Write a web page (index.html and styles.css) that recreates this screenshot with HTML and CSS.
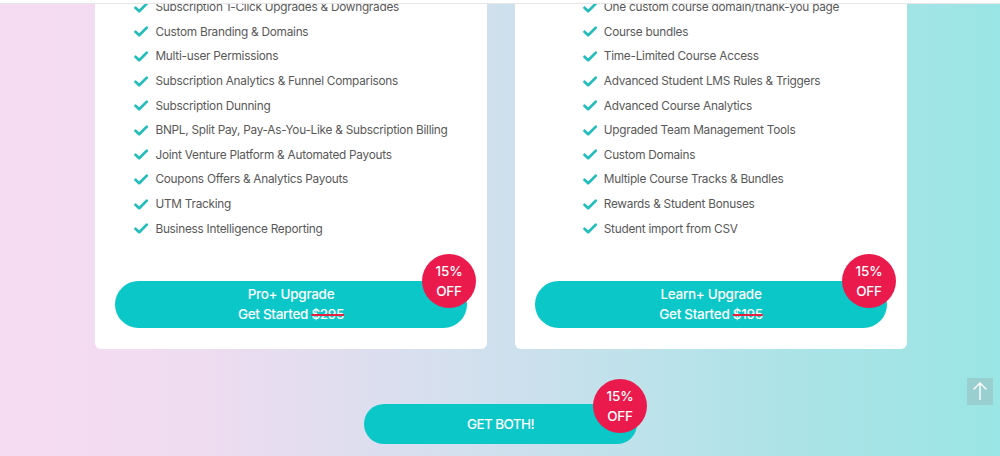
FILE: index.html
```html
<!DOCTYPE html>
<html lang="en">
<head>
<meta charset="utf-8">
<title>Upgrades</title>
<link rel="stylesheet" href="styles.css">
</head>
<body>
<div class="topbar"></div>
<main class="page">
  <section class="cards">
    <div class="card">
      <ul class="features">
        <li><svg class="check" viewBox="0 0 14 11"><path d="M1.5 5.8 L5.2 9.2 L12.8 1.6" /></svg>Subscription 1-Click Upgrades &amp; Downgrades</li>
        <li><svg class="check" viewBox="0 0 14 11"><path d="M1.5 5.8 L5.2 9.2 L12.8 1.6" /></svg>Custom Branding &amp; Domains</li>
        <li><svg class="check" viewBox="0 0 14 11"><path d="M1.5 5.8 L5.2 9.2 L12.8 1.6" /></svg>Multi-user Permissions</li>
        <li><svg class="check" viewBox="0 0 14 11"><path d="M1.5 5.8 L5.2 9.2 L12.8 1.6" /></svg>Subscription Analytics &amp; Funnel Comparisons</li>
        <li><svg class="check" viewBox="0 0 14 11"><path d="M1.5 5.8 L5.2 9.2 L12.8 1.6" /></svg>Subscription Dunning</li>
        <li><svg class="check" viewBox="0 0 14 11"><path d="M1.5 5.8 L5.2 9.2 L12.8 1.6" /></svg>BNPL, Split Pay, Pay-As-You-Like &amp; Subscription Billing</li>
        <li><svg class="check" viewBox="0 0 14 11"><path d="M1.5 5.8 L5.2 9.2 L12.8 1.6" /></svg>Joint Venture Platform &amp; Automated Payouts</li>
        <li><svg class="check" viewBox="0 0 14 11"><path d="M1.5 5.8 L5.2 9.2 L12.8 1.6" /></svg>Coupons Offers &amp; Analytics Payouts</li>
        <li><svg class="check" viewBox="0 0 14 11"><path d="M1.5 5.8 L5.2 9.2 L12.8 1.6" /></svg>UTM Tracking</li>
        <li><svg class="check" viewBox="0 0 14 11"><path d="M1.5 5.8 L5.2 9.2 L12.8 1.6" /></svg>Business Intelligence Reporting</li>
      </ul>
      <a class="cta" href="#">
        <span>Pro+ Upgrade</span>
        <span>Get Started <s class="old">$295</s></span>
        <span class="badge">15%<br>OFF</span>
      </a>
    </div>
    <div class="card">
      <ul class="features">
        <li><svg class="check" viewBox="0 0 14 11"><path d="M1.5 5.8 L5.2 9.2 L12.8 1.6" /></svg>One custom course domain/thank-you page</li>
        <li><svg class="check" viewBox="0 0 14 11"><path d="M1.5 5.8 L5.2 9.2 L12.8 1.6" /></svg>Course bundles</li>
        <li><svg class="check" viewBox="0 0 14 11"><path d="M1.5 5.8 L5.2 9.2 L12.8 1.6" /></svg>Time-Limited Course Access</li>
        <li><svg class="check" viewBox="0 0 14 11"><path d="M1.5 5.8 L5.2 9.2 L12.8 1.6" /></svg>Advanced Student LMS Rules &amp; Triggers</li>
        <li><svg class="check" viewBox="0 0 14 11"><path d="M1.5 5.8 L5.2 9.2 L12.8 1.6" /></svg>Advanced Course Analytics</li>
        <li><svg class="check" viewBox="0 0 14 11"><path d="M1.5 5.8 L5.2 9.2 L12.8 1.6" /></svg>Upgraded Team Management Tools</li>
        <li><svg class="check" viewBox="0 0 14 11"><path d="M1.5 5.8 L5.2 9.2 L12.8 1.6" /></svg>Custom Domains</li>
        <li><svg class="check" viewBox="0 0 14 11"><path d="M1.5 5.8 L5.2 9.2 L12.8 1.6" /></svg>Multiple Course Tracks &amp; Bundles</li>
        <li><svg class="check" viewBox="0 0 14 11"><path d="M1.5 5.8 L5.2 9.2 L12.8 1.6" /></svg>Rewards &amp; Student Bonuses</li>
        <li><svg class="check" viewBox="0 0 14 11"><path d="M1.5 5.8 L5.2 9.2 L12.8 1.6" /></svg>Student import from CSV</li>
      </ul>
      <a class="cta" href="#">
        <span>Learn+ Upgrade</span>
        <span>Get Started <s class="old">$195</s></span>
        <span class="badge">15%<br>OFF</span>
      </a>
    </div>
  </section>
  <div class="both-wrap">
    <a class="both" href="#">GET BOTH!<span class="badge badge-both">15%<br>OFF</span></a>
  </div>
</main>
<a class="to-top" href="#"><svg viewBox="0 0 26 27"><path d="M13 5 V22 M6.5 11.5 L13 5 L19.5 11.5" /></svg></a>
</body>
</html>
```
FILE: styles.css
```css
* { box-sizing: border-box; }
html, body { height: 100%; }
body {
  margin: 0;
  overflow: hidden;
  font-family: Inter, "Noto Sans", sans-serif;
  background: linear-gradient(90deg, #f6dcf3 0%, #efdcf1 20%, #cfe0ed 50%, #b0e3e8 75%, #9ae5e5 100%);
}
.topbar {
  position: absolute;
  top: 0; left: 0; right: 0;
  height: 4px;
  background: #fff;
  border-bottom: 1px solid #e6e6e6;
  z-index: 5;
}
.page { margin-top: -25px; }
.cards {
  display: flex;
  justify-content: center;
  gap: 28px;
  padding-left: 2px;
}
.card {
  width: 392px;
  background: #fff;
  border-radius: 6px;
  padding: 20px 20px 21px;
  display: flex;
  flex-direction: column;
}
.features {
  list-style: none;
  margin: 0 0 40px;
  padding: 0;
  align-self: center;
}
.features li {
  height: 24.6px;
  display: flex;
  align-items: center;
  font-size: 11.8px;
  color: #585858;
  letter-spacing: -0.25px;
  white-space: nowrap;
}
.check {
  width: 14px; height: 11px;
  margin-right: 7px;
  flex: none;
}
.check path {
  fill: none;
  stroke: #23bdbd;
  stroke-width: 2.7;
  stroke-linecap: round;
  stroke-linejoin: round;
}
.cta {
  position: relative;
  display: flex;
  flex-direction: column;
  align-items: center;
  justify-content: center;
  height: 47px;
  border-radius: 24px;
  background: #0bc7c7;
  color: #fff;
  text-decoration: none;
  font-size: 13.5px;
  letter-spacing: -0.3px;
  line-height: 20px;
  font-weight: 500;
}
.old {
  text-decoration-color: #e8203f;
  text-decoration-thickness: 2px;
}
.badge {
  position: absolute;
  top: -27px;
  right: -9px;
  width: 54px; height: 54px;
  border-radius: 50%;
  background: #ea1a4c;
  color: #fff;
  font-size: 13.5px;
  letter-spacing: -0.2px;
  line-height: 20px;
  font-weight: 500;
  display: flex;
  align-items: center;
  justify-content: center;
  text-align: center;
}
.both-wrap {
  display: flex;
  justify-content: center;
  margin-top: 55px;
}
.both {
  position: relative;
  display: flex;
  align-items: center;
  justify-content: center;
  width: 273px;
  height: 40px;
  border-radius: 20px;
  background: #0bc7c7;
  color: #fff;
  text-decoration: none;
  font-size: 13.5px;
  font-weight: 500;
  letter-spacing: -0.6px;
  margin-left: 1px;
}
.badge-both { top: -25px; right: -10px; }
.to-top {
  position: fixed;
  left: 967px;
  top: 378px;
  width: 26px;
  height: 27px;
  background: rgba(150, 180, 180, 0.45);
}
.to-top svg { width: 26px; height: 27px; display: block; }
.to-top path { fill: none; stroke: #fff; stroke-width: 1.4; }
```
